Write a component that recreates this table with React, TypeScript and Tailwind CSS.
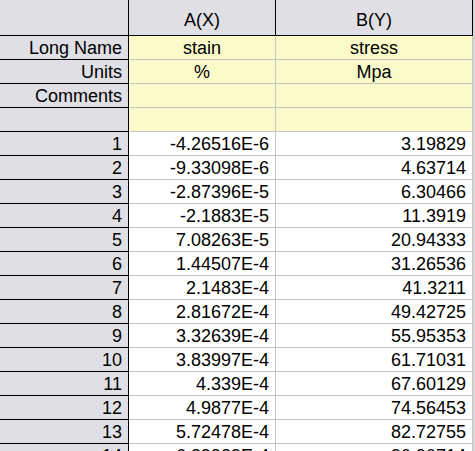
import React from "react";

const rows: [string, string, string][] = [
  ["1", "-4.26516E-6", "3.19829"],
  ["2", "-9.33098E-6", "4.63714"],
  ["3", "-2.87396E-5", "6.30466"],
  ["4", "-2.1883E-5", "11.3919"],
  ["5", "7.08263E-5", "20.94333"],
  ["6", "1.44507E-4", "31.26536"],
  ["7", "2.1483E-4", "41.3211"],
  ["8", "2.81672E-4", "49.42725"],
  ["9", "3.32639E-4", "55.95353"],
  ["10", "3.83997E-4", "61.71031"],
  ["11", "4.339E-4", "67.60129"],
  ["12", "4.9877E-4", "74.56453"],
  ["13", "5.72478E-4", "82.72755"],
  ["14", "6.39939E-4", "90.90714"],
];

const labels: [string, string, string][] = [
  ["Long Name", "stain", "stress"],
  ["Units", "%", "Mpa"],
  ["Comments", "", ""],
  ["", "", ""],
];

export default function App() {
  return (
    <div
      className="w-[475px] h-[451px] overflow-hidden bg-[#d6d6d6] text-black text-[18px]"
      style={{ fontFamily: '"Liberation Sans", Arial, sans-serif' }}
    >
      <div className="w-[473px] flex flex-col">
        {/* column header */}
        <div className="flex h-[36px] bg-[#dfdfe5] border-b border-black">
          <div className="w-[129px] border-r border-black" />
          <div className="w-[147px] border-r border-black flex items-center justify-center pt-[5px] leading-none">
            A(X)
          </div>
          <div className="w-[197px] border-r border-black flex items-center justify-center pt-[5px] leading-none">
            B(Y)
          </div>
        </div>
        {labels.map(([l, a, b], i) => (
          <div key={i} className="flex h-[24px]">
            <div className="w-[129px] bg-[#dfdfe5] border-r border-b border-black flex items-center justify-end pr-[6px] leading-none">
              {l}
            </div>
            <div className="w-[147px] bg-[#fbfbca] border-r border-b border-[#c4c4c4] flex items-center justify-center leading-none">
              {a}
            </div>
            <div className="w-[197px] bg-[#fbfbca] border-r border-b border-[#c4c4c4] flex items-center justify-center leading-none">
              {b}
            </div>
          </div>
        ))}
        {rows.map(([n, a, b]) => (
          <div key={n} className="flex h-[24px]">
            <div className="w-[129px] bg-[#dfdfe5] border-r border-b border-black flex items-center justify-end pr-[6px] leading-none">
              {n}
            </div>
            <div className="w-[147px] bg-white border-r border-b border-[#c4c4c4] flex items-center justify-end pr-[6px] leading-none">
              {a}
            </div>
            <div className="w-[197px] bg-white border-r border-b border-[#c4c4c4] flex items-center justify-end pr-[6px] leading-none">
              {b}
            </div>
          </div>
        ))}
      </div>
    </div>
  );
}
